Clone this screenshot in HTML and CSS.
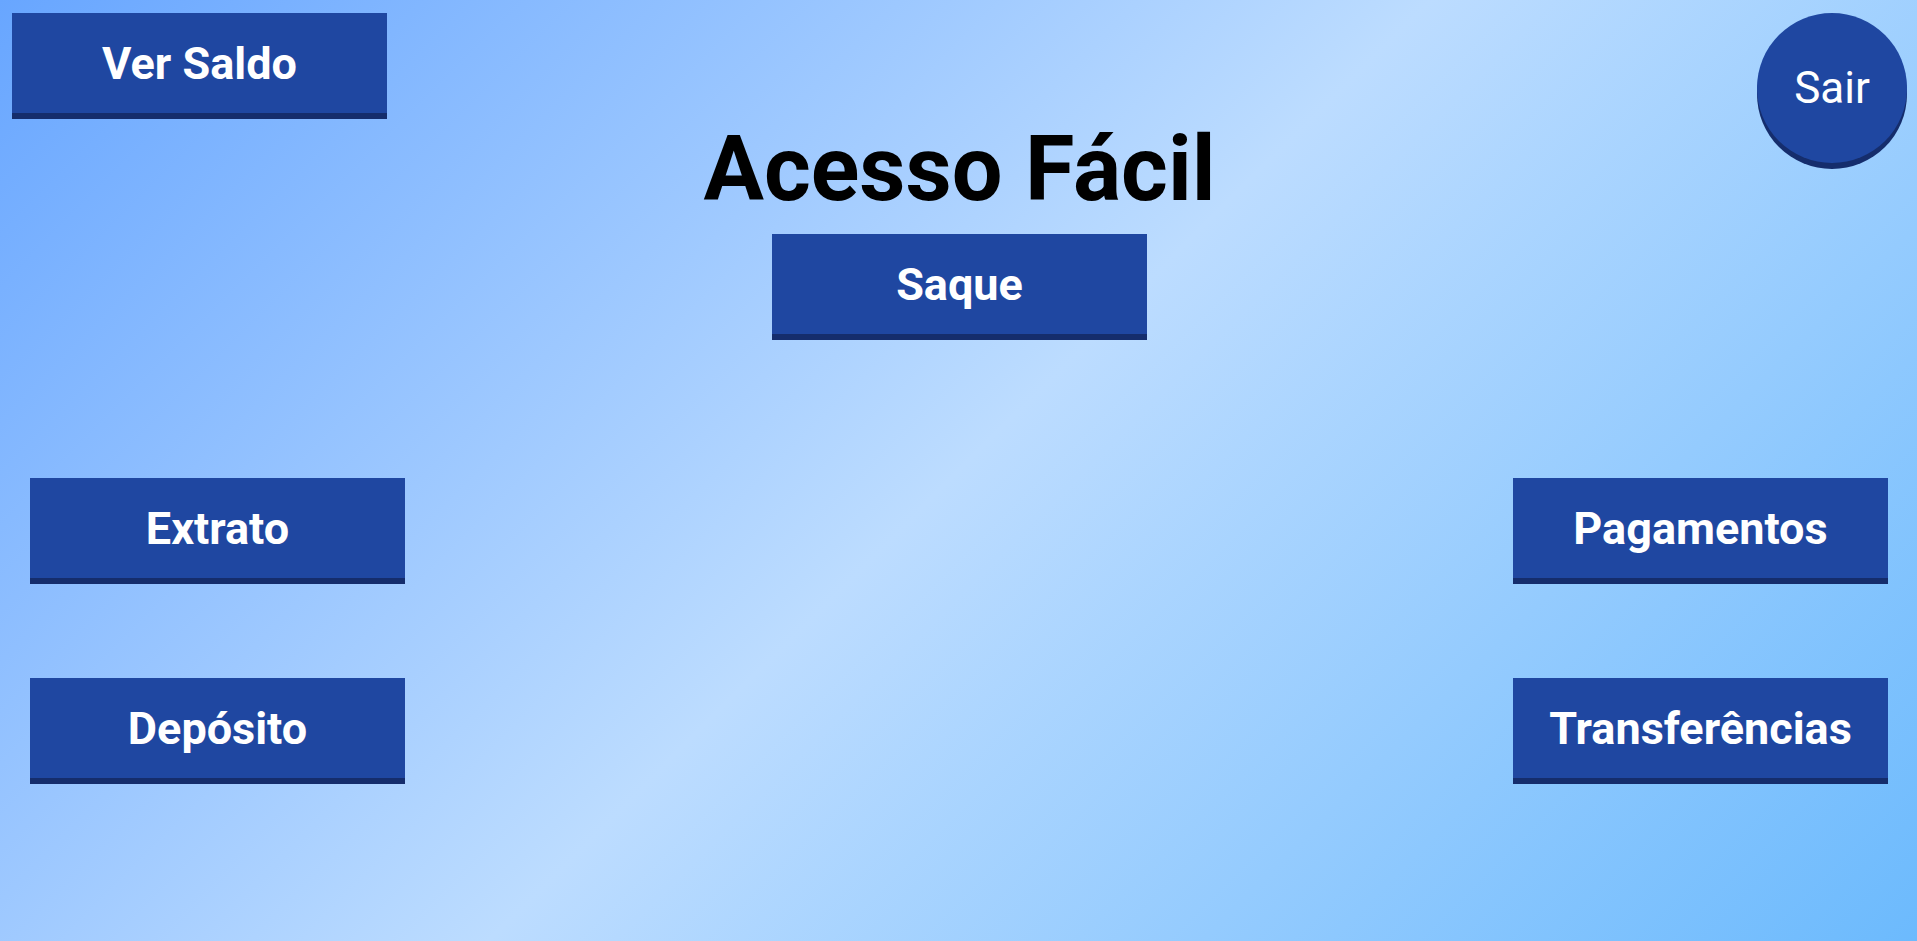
FILE: index.html
```html
<!DOCTYPE html>
<html lang="pt-BR">
<head>
<meta charset="utf-8">
<title>Acesso Fácil</title>
<link rel="stylesheet" href="styles.css">
</head>
<body>
<main class="page">
  <header class="top">
    <button class="btn btn-saldo">Ver Saldo</button>
    <div class="center">
      <h1 class="title">Acesso Fácil</h1>
      <button class="btn">Saque</button>
    </div>
    <button class="btn-sair">Sair</button>
  </header>
  <section class="sides">
    <div class="row">
      <button class="btn">Extrato</button>
      <button class="btn">Pagamentos</button>
    </div>
    <div class="row">
      <button class="btn">Depósito</button>
      <button class="btn">Transferências</button>
    </div>
  </section>
</main>
</body>
</html>
```
FILE: styles.css
```css
html, body {
  margin: 0;
  padding: 0;
}
body {
  min-height: 100vh;
  background: linear-gradient(135deg, #68a6ff 0%, #bcdcff 50%, #6cbafd 100%);
  font-family: Roboto, "Liberation Sans", Arial, sans-serif;
}
.page {
  min-height: 100vh;
}
.top {
  display: grid;
  grid-template-columns: 1fr auto 1fr;
  align-items: start;
  padding: 12px 10px 0 12px;
}
.btn {
  width: 375px;
  height: 100px;
  border: none;
  padding: 0;
  margin: 0;
  background: #1f47a1;
  color: #fff;
  font-family: Roboto, "Liberation Sans", Arial, sans-serif;
  font-weight: 700;
  font-size: 45px;
  display: flex;
  align-items: center;
  justify-content: center;
  box-shadow: 0 6px 0 #152d6c;
  cursor: pointer;
}
.btn-saldo {
  justify-self: start;
  margin-top: 1px;
}
.center {
  display: flex;
  flex-direction: column;
  align-items: center;
}
.title {
  margin: 103px 0 0 0;
  font-size: 90px;
  line-height: 110px;
  font-weight: 700;
  color: #000;
}
.center .btn {
  margin-top: 9px;
}
.btn-sair {
  justify-self: end;
  width: 150px;
  height: 150px;
  margin-top: 1px;
  border-radius: 50%;
  border: none;
  padding: 0;
  background: #1f47a1;
  color: #fff;
  font-family: Roboto, "Liberation Sans", Arial, sans-serif;
  font-size: 44px;
  font-weight: 400;
  box-shadow: 0 6px 0 #152d6c;
  cursor: pointer;
}
.sides {
  margin-top: 144px;
  display: flex;
  flex-direction: column;
  gap: 100px;
}
.row {
  display: flex;
  justify-content: space-between;
  padding: 0 29px 0 30px;
}
```
